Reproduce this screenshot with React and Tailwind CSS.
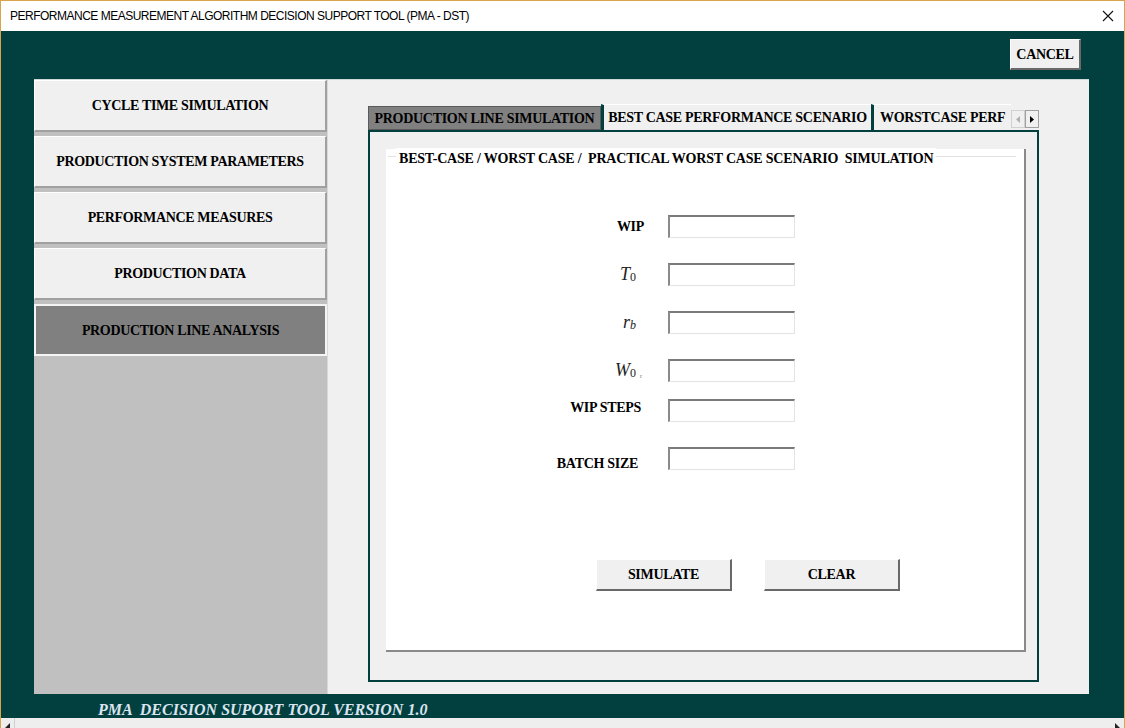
import React from 'react';

const serif = "font-['Liberation_Serif','Times_New_Roman',serif]";

const SideButton = ({ label, active }) => (
    <div
        className={`h-[52px] flex items-center justify-center ${serif} font-bold text-[14px] tracking-[-0.35px] text-black ${
            active
                ? 'bg-[#808080] border-2 border-[#f4f4f4]'
                : 'bg-[#f0f0f0] border-t border-l border-t-[#ffffff] border-l-[#ffffff] border-b-2 border-r-2 border-b-[#a0a0a0] border-r-[#a0a0a0]'
        }`}
    >
        {label}
    </div>
);

const Field = ({ label, className = '' }) => (
    <div className={`flex items-center h-[23px] ${className}`}>
        <div className="w-[260px] flex justify-end pr-[2px]">{label}</div>
        <div className="ml-[22px] w-[127px] h-[23px] bg-white border-t-2 border-l-2 border-t-[#7a7a7a] border-l-[#8a8a8a] border-b border-r border-b-[#e3e3e3] border-r-[#e3e3e3]" />
    </div>
);

const BoldLabel = ({ children, className = '' }) => (
    <span className={`${serif} font-bold text-[14px] tracking-[-0.3px] text-black ${className}`}>{children}</span>
);

const MathLabel = ({ base, sub, extra }) => (
    <span className={`${serif} text-[18px] text-[#222] relative mr-[8px]`}>
        <i>{base}</i>
        <sub className="text-[12px] not-italic relative -bottom-[1px]">{sub}</sub>
        {extra && <span className="absolute -right-[6px] top-[15px] text-[6px] text-gray-500">r</span>}
    </span>
);

const WinButton = ({ label, className = '' }) => (
    <div
        className={`flex items-center justify-center bg-[#f0f0f0] border-t border-l border-t-[#ffffff] border-l-[#ffffff] border-b-2 border-r-2 border-b-[#696969] border-r-[#696969] ${serif} font-bold text-[14px] tracking-[-0.3px] text-black ${className}`}
    >
        {label}
    </div>
);

export default function App() {
    return (
        <div className="w-[1125px] h-[728px] flex flex-col border-x border-t border-[#d9a44c] bg-[#024040] overflow-hidden">
            {/* Title bar */}
            <div className="h-[30px] bg-white flex items-center justify-between pl-[9px] pr-[8px] shrink-0">
                <span className="font-['Liberation_Sans',Arial,sans-serif] text-[12px] tracking-[-0.5px] text-black">
                    PERFORMANCE MEASUREMENT ALGORITHM DECISION SUPPORT TOOL (PMA - DST)
                </span>
                <svg width="12" height="12" viewBox="0 0 12 12" className="mr-[2px]">
                    <path d="M1 1 L11 11 M11 1 L1 11" stroke="#111" strokeWidth="1.1" />
                </svg>
            </div>

            {/* Body */}
            <div className="flex-1 flex flex-col bg-[#024040]">
                <div className="h-[48px] flex justify-end items-start pt-[8px] pr-[43px] shrink-0">
                    <WinButton label="CANCEL" className="w-[71px] h-[31px] text-[13.5px]" />
                </div>

                <div className="ml-[33px] w-[1055px] h-[615px] flex bg-[#f0f0f0] border-t border-[#cfd8d8]">
                    {/* Sidebar */}
                    <div className="w-[294px] bg-[#c0c0c0] flex flex-col gap-[4px] border-r border-[#d8d8d8]">
                        <SideButton label="CYCLE TIME SIMULATION" />
                        <SideButton label="PRODUCTION SYSTEM PARAMETERS" />
                        <SideButton label="PERFORMANCE MEASURES" />
                        <SideButton label="PRODUCTION DATA" />
                        <SideButton label="PRODUCTION LINE ANALYSIS" active />
                    </div>

                    {/* Tab area */}
                    <div className="flex-1 pl-[40px] pt-[24px] bg-[#f0f0f0]">
                        <div className="w-[671px] flex h-[26px] items-end">
                            <div className={`h-[24px] w-[233px] bg-[#808080] border border-[#5a5a5a] flex items-center justify-center ${serif} font-bold text-[14px] tracking-[-0.3px] text-black`}>
                                PRODUCTION LINE SIMULATION
                            </div>
                            <div className={`h-[26px] w-[270px] bg-[#f0f0f0] border-l-[3px] border-[#024040] border-t border-t-white flex items-center justify-center ${serif} font-bold text-[14px] tracking-[-0.3px] text-black`}>
                                BEST CASE PERFORMANCE SCENARIO
                            </div>
                            <div className={`h-[26px] w-[140px] bg-[#f0f0f0] border-l-[3px] border-[#024040] border-t border-t-white overflow-hidden whitespace-nowrap pl-[6px] flex items-center ${serif} font-bold text-[14px] tracking-[-0.3px] text-black`}>
                                WORSTCASE PERF
                            </div>
                            <div className="h-[20px] flex items-center mb-[1px]">
                                <div className="w-[14px] h-[18px] bg-[#f0f0f0] border border-[#d0d0d0] flex items-center justify-center">
                                    <svg width="4" height="7" viewBox="0 0 4 7"><path d="M4 0 L0 3.5 L4 7 Z" fill="#b0b0b0" /></svg>
                                </div>
                                <div className="w-[14px] h-[18px] bg-[#f0f0f0] border border-[#a0a0a0] flex items-center justify-center">
                                    <svg width="4" height="7" viewBox="0 0 4 7"><path d="M0 0 L4 3.5 L0 7 Z" fill="#000" /></svg>
                                </div>
                            </div>
                        </div>

                        <div className="w-[671px] h-[552px] border-2 border-[#024040] bg-[#f0f0f0] pt-[17px] pl-[16px]">
                            <div className="relative w-[640px] h-[503px] bg-white border-b-2 border-r-2 border-[#8a8a8a]">
                                {/* group box frame line */}
                                <div className="absolute left-[2px] right-[8px] top-[7px] h-px bg-[#e2e2e2]" />
                                <div className={`absolute left-[10px] top-[-1px] bg-white px-[3px] ${serif} font-bold text-[14px] tracking-[-0.2px] text-black whitespace-pre`}>
                                    {'BEST-CASE / WORST CASE /  PRACTICAL WORST CASE SCENARIO  SIMULATION'}
                                </div>

                                <div className="pt-[66px] flex flex-col">
                                    <Field label={<BoldLabel>WIP</BoldLabel>} />
                                    <Field className="mt-[25px]" label={<MathLabel base="T" sub="0" />} />
                                    <Field className="mt-[25px]" label={<MathLabel base="r" sub={<i>b</i>} />} />
                                    <Field className="mt-[25px]" label={<MathLabel base="W" sub="0" extra />} />
                                    <Field className="mt-[17px]" label={<BoldLabel className="-mt-[6px] mr-[3px]">WIP STEPS</BoldLabel>} />
                                    <Field className="mt-[25px]" label={<BoldLabel className="mt-[9px] mr-[6px]">BATCH SIZE</BoldLabel>} />
                                </div>

                                <div className="flex gap-[32px] pl-[210px] mt-[89px]">
                                    <WinButton label="SIMULATE" className="w-[136px] h-[32px]" />
                                    <WinButton label="CLEAR" className="w-[136px] h-[32px]" />
                                </div>
                            </div>
                        </div>
                    </div>
                </div>

                {/* Footer */}
                <div className="flex-1 flex items-end pl-[97px]">
                    <span className={`${serif} italic font-bold text-[16px] leading-[16px] text-[#dbe5ef] whitespace-pre`}>
                        {'PMA  DECISION SUPORT TOOL VERSION 1.0'}
                    </span>
                </div>
            </div>

            {/* Bottom scroll strip */}
            <div className="h-[10px] bg-[#eeeeee] flex items-center justify-between shrink-0">
                <div className="w-[14px] h-[10px] border-r border-[#d0d0d0] flex items-end justify-center">
                    <svg width="5" height="5" viewBox="0 0 5 5"><path d="M5 0 L0 5 L5 5 Z" fill="#222" /></svg>
                </div>
                <div className="w-[14px] h-[10px] flex items-end justify-center">
                    <svg width="5" height="5" viewBox="0 0 5 5"><path d="M0 0 L5 5 L0 5 Z" fill="#222" /></svg>
                </div>
            </div>
        </div>
    );
}
